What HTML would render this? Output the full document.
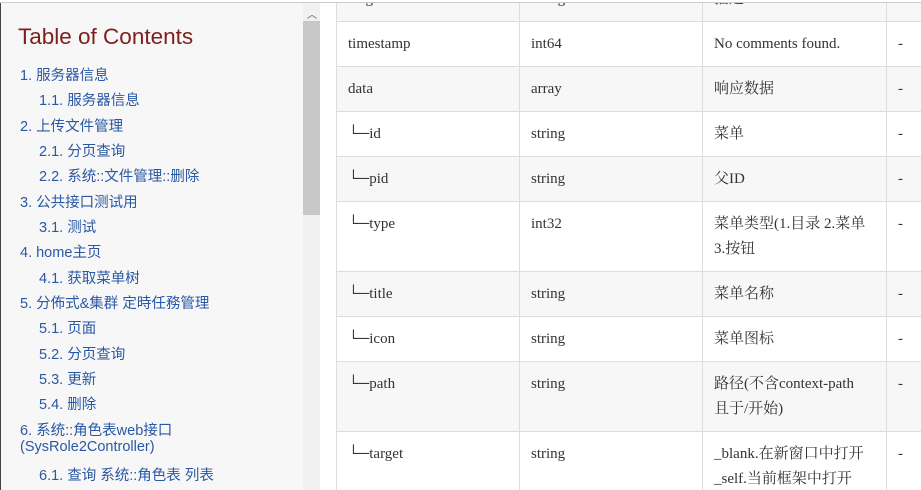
<!DOCTYPE html>
<html><head><meta charset="utf-8"><style>
*{margin:0;padding:0;box-sizing:border-box}
html,body{width:921px;height:490px;overflow:hidden}
body{background:#fff;position:relative}
.top{position:absolute;left:0;top:0;width:921px;height:3px;background:#fff;border-bottom:1px solid #ccc;z-index:5}
.side{position:absolute;left:0;top:3px;width:303px;height:487px;background:#f7f7f7;border-left:1px solid #444;font-family:"Liberation Sans","Noto Sans CJK SC",sans-serif;color:#2a58a4;font-size:14.5px}
.side h1{position:absolute;left:17px;top:21px;font-weight:normal;font-size:22.5px;color:#7d1f1a;font-family:"Liberation Sans",sans-serif}
.side div.i{position:absolute;white-space:nowrap}
.track{position:absolute;left:303px;top:3px;width:17px;height:487px;background:#f1f1f1}
.thumb{position:absolute;left:303px;top:21px;width:17px;height:194px;background:#c8c8c8}
.arr{position:absolute;left:307px;top:6px;font-size:10px;color:#555;font-family:"DejaVu Sans",sans-serif}
.tw{position:absolute;left:336px;top:0;width:585px;height:490px;overflow:hidden}
table{position:absolute;left:0;top:-24px;width:640px;table-layout:fixed;border-collapse:collapse;font-family:"Liberation Serif","Noto Serif CJK SC",serif;font-size:15px;color:#333}
td{border:1px solid #ddd;padding:10px 11px 0;line-height:25px;vertical-align:top;height:45px;overflow:hidden;white-space:nowrap}
tr.t td{height:70px}
tr:nth-child(odd) td{background:#f7f7f7}
</style></head><body>
<div class="top"></div>
<div class="side">
<h1>Table of Contents</h1>
<div class="i" style="left:19px;top:61px">1. 服务器信息</div>
<div class="i" style="left:38px;top:86px">1.1. 服务器信息</div>
<div class="i" style="left:19px;top:112px">2. 上传文件管理</div>
<div class="i" style="left:38px;top:137px">2.1. 分页查询</div>
<div class="i" style="left:38px;top:162px">2.2. 系统::文件管理::删除</div>
<div class="i" style="left:19px;top:188px">3. 公共接口测试用</div>
<div class="i" style="left:38px;top:213px">3.1. 测试</div>
<div class="i" style="left:19px;top:238px">4. home主页</div>
<div class="i" style="left:38px;top:264px">4.1. 获取菜单树</div>
<div class="i" style="left:19px;top:289px">5. 分佈式&amp;集群 定時任務管理</div>
<div class="i" style="left:38px;top:314px">5.1. 页面</div>
<div class="i" style="left:38px;top:340px">5.2. 分页查询</div>
<div class="i" style="left:38px;top:365px">5.3. 更新</div>
<div class="i" style="left:38px;top:390px">5.4. 删除</div>
<div class="i" style="left:19px;top:416px">6. 系统::角色表web接口</div>
<div class="i" style="left:19px;top:436px">(SysRole2Controller)</div>
<div class="i" style="left:38px;top:461px">6.1. 查询 系统::角色表 列表</div>
</div>
<div class="track"></div><div class="thumb"></div><div class="arr">︿</div>
<div class="tw">
<table>
<colgroup><col style="width:183px"><col style="width:183px"><col style="width:184px"><col style="width:90px"></colgroup>
<tr><td>msg</td><td>string</td><td>描述</td><td>-</td></tr>
<tr><td>timestamp</td><td>int64</td><td>No comments found.</td><td>-</td></tr>
<tr><td>data</td><td>array</td><td>响应数据</td><td>-</td></tr>
<tr><td>└─id</td><td>string</td><td>菜单</td><td>-</td></tr>
<tr><td>└─pid</td><td>string</td><td>父ID</td><td>-</td></tr>
<tr class="t"><td>└─type</td><td>int32</td><td>菜单类型(1.目录 2.菜单<br>3.按钮</td><td>-</td></tr>
<tr><td>└─title</td><td>string</td><td>菜单名称</td><td>-</td></tr>
<tr><td>└─icon</td><td>string</td><td>菜单图标</td><td>-</td></tr>
<tr class="t"><td>└─path</td><td>string</td><td>路径(不含context-path<br>且于/开始)</td><td>-</td></tr>
<tr class="t"><td>└─target</td><td>string</td><td>_blank.在新窗口中打开<br>_self.当前框架中打开</td><td>-</td></tr>
</table>
</div>
</body></html>
